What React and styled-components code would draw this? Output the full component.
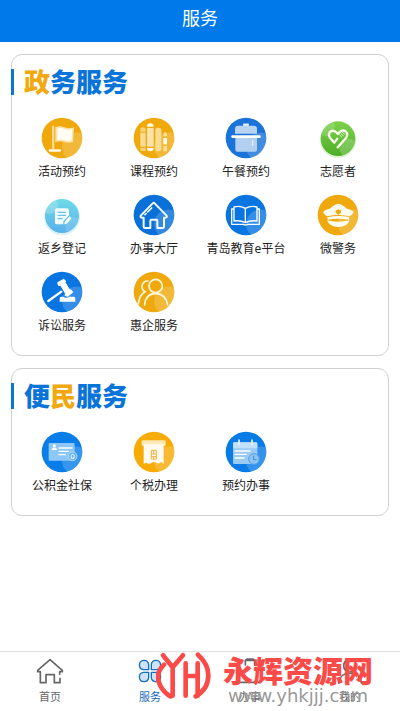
import React from "react";
import styled, { createGlobalStyle } from "styled-components";

const GlobalStyle = createGlobalStyle`
    * {
        box-sizing: border-box;
    }
    body {
        margin: 0;
        background: #fff;
        font-family: "Noto Sans", "Noto Sans CJK SC", sans-serif;
    }
    button {
        border: 0;
        padding: 0;
        background: none;
        font-family: inherit;
        cursor: pointer;
    }
    svg {
        display: block;
        flex-shrink: 0;
    }
    `;

const Page = styled.div`
    display: flex;
    flex-direction: column;
    min-height: 100vh;
    `;

const Header = styled.header`
    display: flex;
    justify-content: center;
    padding: 6px 0 12px;
    background: #007aeb;
    color: #fff;
    `;

const HeaderTitle = styled.h1`
    margin: 0;
    font-size: 18px;
    font-weight: 400;
    line-height: 24px;
    `;

const Main = styled.main`
    display: flex;
    flex: 1;
    flex-direction: column;
    gap: 12px;
    padding: 12px 11px;
    `;

const Card = styled.section`
    padding: 14px 4px 20px;
    border: 1px solid #d0d0d0;
    border-radius: 11px;
    `;

const CardTitle = styled.h2`
    margin: 0 0 22px -5px;
    padding-left: 10px;
    border-left: 3px solid #0b74d8;
    color: #0b74d8;
    font-size: 26px;
    font-weight: 900;
    line-height: 26px;
    `;

const Accent = styled.span`
    color: #f2a90f;
    `;

const Grid = styled.div`
    display: grid;
    grid-template-columns: repeat(4, 1fr);
    row-gap: 13px;
    `;

const Item = styled.button`
    display: flex;
    flex-direction: column;
    align-items: center;
    gap: 4px;
    color: #222;
    font-size: 12px;
    line-height: 18px;
    white-space: nowrap;
    `;

const TabBar = styled.nav`
    position: relative;
    display: grid;
    grid-template-columns: repeat(4, 1fr);
    border-top: 1px solid #e2e2e2;
    `;

const Tab = styled.button`
    display: flex;
    flex-direction: column;
    align-items: center;
    gap: 5px;
    padding: 5px 0 7px;
    color: ${(props) => (props.$active ? "#1268b8" : "#666")};
    font-size: 11px;
    line-height: 14px;
    `;

const Watermark = styled.div`
    position: absolute;
    top: 0;
    right: 27px;
    display: flex;
    gap: 12px;
    pointer-events: none;
    `;

const WatermarkText = styled.div`
    display: flex;
    flex-direction: column;
    align-items: center;
    `;

const WatermarkName = styled.div`
    color: #fb4b49;
    font-size: 30px;
    font-weight: 900;
    line-height: 38px;
    `;

const WatermarkUrl = styled.div`
    color: #999;
    font-family: "DejaVu Sans", sans-serif;
    font-size: 18px;
    line-height: 12px;
    `;

const BLUE = "#0875e1";
const YELLOW = "#f0a90d";

function Badge({ color, children }) {
    return (
        <svg width="42" height="42" viewBox="0 0 126 126" fill="none" aria-hidden="true">
            <circle cx="63" cy="63" r="61" fill={color} />
            <path d="M123 50 A43 43 0 0 0 78 122 A61 61 0 0 0 123 50Z" fill="#fff" opacity="0.18" />
            {children}
        </svg>
    );
}

const FlagIcon = () => (
    <Badge color={YELLOW}>
        <rect x="33" y="26" width="7" height="72" rx="3" fill="#f9dc94" />
        <rect x="23" y="97" width="37" height="7" rx="3" fill="#fffbe8" />
        <path d="M43 31 Q56 25 70 31 T99 31 L96 75 Q84 80 70 75 T43 75Z" fill="#fbe3a9" />
        <path d="M49 35 Q60 31 71 36 T94 36 L92 70 Q82 74 71 70 T49 70Z" fill="#fffdf4" />
    </Badge>
);

const BooksIcon = () => (
    <Badge color={YELLOW}>
        <path d="M22 44 V39 Q22 31 30 31 Q38 31 38 39 V44Z M22 92 H38 V102 H26 Q22 102 22 98Z" fill="#f8d277" />
        <rect x="22" y="47" width="16" height="42" fill="#f9dc94" />
        <path d="M42 29 Q42 19 52 19 Q62 19 62 29Z M42 93 H62 Q62 103 52 103 Q42 103 42 93Z" fill="#fffbe8" />
        <rect x="42" y="33" width="20" height="56" fill="#fbe3a9" />
        <rect x="67" y="32" width="18" height="71" rx="8" fill="#f9dc94" />
        <path d="M91 58 V51 Q91 46 96 46 Q102 46 102 52 V58Z M91 87 H102 V103 H91Z" fill="#f9dc94" />
        <rect x="91" y="63" width="11" height="19" fill="#fffbe8" />
    </Badge>
);

const PotIcon = () => (
    <Badge color="#1973d8">
        <path d="M30 50 V35 Q30 26 39 26 H55 V20 H71 V26 H87 Q96 26 96 35 V50Z" fill="#b9d4f3" />
        <path d="M55 20 H71 V26 H55Z" fill="#e6f1fc" />
        <rect x="19" y="55" width="88" height="8" rx="3" fill="#fff" />
        <path d="M31 63 H96 V98 Q96 104 90 104 H37 Q31 104 31 98Z" fill="#b3cff1" />
        <path d="M83 71 V85" stroke="#e6f1fc" strokeWidth="4" strokeLinecap="round" />
    </Badge>
);

const HeartIcon = () => (
    <svg width="42" height="42" viewBox="0 0 126 126" fill="none" aria-hidden="true">
        <defs>
            <linearGradient id="leaf" x1="0" y1="0" x2="0" y2="1">
                <stop offset="0" stopColor="#7ed24b" />
                <stop offset="1" stopColor="#4cae26" />
            </linearGradient>
        </defs>
        <circle cx="63" cy="69" r="54" fill="#dff3d4" />
        <circle cx="63" cy="65" r="52" fill="url(#leaf)" />
        <path d="M14 48 A52 52 0 0 1 48 15 A27 27 0 0 1 14 55Z" fill="#fff" opacity="0.16" />
        <path d="M114 72 A28 28 0 0 0 77 115 A52 52 0 0 0 114 72Z" fill="#fff" opacity="0.2" />
        <path
            d="M62 91 L87 63 Q95 51 86 43 Q76 37 68 45 L63 51 L57 45 Q46 37 38 46 Q33 54 39 62 L52 77 L61 65"
            stroke="#f7ffe9"
            strokeWidth="7"
            strokeLinecap="round"
            strokeLinejoin="round"
        />
        <path d="M68 54 L74 60 M72 50 L79 56 M77 46 L83 52" stroke="#e4f8cf" strokeWidth="3" strokeLinecap="round" />
    </svg>
);

const NoteIcon = () => (
    <svg width="42" height="42" viewBox="0 0 126 126" fill="none" aria-hidden="true">
        <defs>
            <linearGradient id="sky" x1="0" y1="0" x2="0" y2="1">
                <stop offset="0" stopColor="#6fdbe6" />
                <stop offset="1" stopColor="#59b0ea" />
            </linearGradient>
        </defs>
        <circle cx="63" cy="70" r="54" fill="#dbf1fb" />
        <circle cx="63" cy="66" r="51" fill="url(#sky)" />
        <path d="M14 50 A51 51 0 0 1 46 18 A26 26 0 0 1 14 57Z" fill="#fff" opacity="0.2" />
        <path d="M113 74 A28 28 0 0 0 78 115 A51 51 0 0 0 113 74Z" fill="#fff" opacity="0.15" />
        <path d="M47 43 H77 Q84 43 84 50 V64 L67 82 V91 H47 Q42 91 42 86 V48 Q42 43 47 43Z" fill="#f2fcff" />
        <path d="M50 55 H75 M50 64 H75 M50 74 H65" stroke="#69c3e8" strokeWidth="4" />
        <path d="M86 67 L92 73 L77 89 L70 91 L71 83Z" fill="#f2fcff" />
    </svg>
);

const HouseIcon = () => (
    <Badge color="#0870d8">
        <path
            d="M32 71 V98 Q32 102 36 102 H52 V80 Q52 77 55 77 H70 Q73 77 73 80 V102 H89 Q93 102 93 98 V71 H98 Q104 69 100 64 L65 28 Q62 25 59 28 L24 64 Q20 69 27 71Z"
            stroke="#f5fbff"
            strokeWidth="6"
            strokeLinejoin="round"
        />
        <path d="M36 62 L39 59 M44 54 L56 42" stroke="#f5fbff" strokeWidth="5" strokeLinecap="round" />
    </Badge>
);

const BookIcon = () => (
    <Badge color={BLUE}>
        <path
            d="M61 43 Q45 34 27 39 V81 Q46 78 61 86 Q77 78 96 81 V39 Q78 34 61 43 V86"
            stroke="#fff"
            strokeWidth="4"
            strokeLinejoin="round"
        />
        <path d="M27 45 H20 V91 H55 Q61 95 68 91 H103 V45 H96" stroke="#fff" strokeWidth="4" strokeLinejoin="round" />
    </Badge>
);

const PoliceIcon = () => (
    <Badge color={YELLOW}>
        <path
            d="M18 54 Q21 48 38 44 Q53 30 64 29 Q75 30 90 44 Q107 48 110 54 Q105 65 97 67 Q64 58 31 67 Q23 65 18 54Z"
            fill="#fffdf0"
        />
        <path d="M31 70 Q64 62 97 70 L96 77 Q64 72 32 77Z" fill="#fffdf0" />
        <path d="M30 79 Q64 87 98 79 Q91 99 64 99 Q37 99 30 79Z" fill="#fffdf0" />
        <path d="M64 45 L67 48 L72 49 V56 L64 62 L56 56 V49 L61 48Z" fill={YELLOW} />
    </Badge>
);

const GavelIcon = () => (
    <Badge color={BLUE}>
        <path d="M61 62 L22 90" stroke="#fff" strokeWidth="7" strokeLinecap="round" />
        <path
            d="M50 35 L68 25 L74 30 L72 34 L86 57 L91 57 L95 64 L80 76 L72 73 L74 68 L59 43 L53 44Z"
            fill="#fff"
            stroke="#fff"
            strokeWidth="3"
            strokeLinejoin="round"
        />
        <path d="M56 92 V82 Q56 77 61 77 H67 Q75 84 84 77 H98 Q103 77 103 82 V92Z" fill="#fff" />
    </Badge>
);

const PeopleIcon = () => (
    <Badge color={YELLOW}>
        <g stroke="#fff7dc" strokeWidth="5" strokeLinecap="round">
            <circle cx="68" cy="45" r="20" />
            <path d="M35 102 Q37 69 68 67 Q99 69 104 102" />
            <path d="M45 30 A17 17 0 0 0 36 62 Q19 72 16 98" />
        </g>
    </Badge>
);

const IdCardIcon = () => (
    <Badge color="#0a7ee8">
        <rect x="23" y="36" width="78" height="53" rx="3" fill="#8cc7f7" />
        <circle cx="40" cy="45" r="5" fill="#fff" />
        <path d="M31 57 Q32 50 40 50 Q48 50 49 57Z" fill="#fff" />
        <path d="M54 51 H93 M54 61 H82 M54 71 H73" stroke="#fff" strokeWidth="4" strokeLinecap="round" />
        <circle cx="95" cy="76" r="13" fill="#64b1f2" stroke="#b5dcfb" strokeWidth="3" />
        <path d="M88 76 L95 69 L102 76 M91 76 V82 H99 V76" stroke="#fff" strokeWidth="3" />
    </Badge>
);

const ReceiptIcon = () => (
    <Badge color="#f7ab05">
        <rect x="26" y="28" width="72" height="17" rx="4" fill="#fde9b5" />
        <path d="M32 40 H92 V99 L84 92 Q78 101 70 95 Q62 91 56 95 Q47 102 41 95 L32 98Z" fill="#fffbf0" />
        <path d="M55 58 H70 V69 H55Z M55 69 V84 H70 V69 M55 77 H70 M62 58 V69 M62 77 V84" stroke="#efb43e" strokeWidth="3" />
    </Badge>
);

const CalendarIcon = () => (
    <Badge color="#087be6">
        <rect x="24" y="34" width="73" height="65" rx="4" fill="#9bcaf5" />
        <path d="M24 52 V38 Q24 34 28 34 H93 Q97 34 97 38 V52Z" fill="#c0e0fb" />
        <path d="M42 27 V41 M81 27 V41" stroke="#e5f4ff" strokeWidth="5" strokeLinecap="round" />
        <path d="M30 60 H75 M30 70 H64 M30 81 H57" stroke="#fff" strokeWidth="4" strokeLinecap="round" />
        <circle cx="87" cy="84" r="16" fill="#8dc3f3" stroke="#4f9fe5" strokeWidth="3" />
        <path d="M86 74 V86 H95" stroke="#3c8fdc" strokeWidth="3" />
    </Badge>
);

function TabIcon({ children }) {
    return (
        <svg width="28" height="28" viewBox="0 0 84 84" fill="none" stroke="#666" strokeWidth="5" strokeLinecap="round" strokeLinejoin="round" aria-hidden="true">
            {children}
        </svg>
    );
}

const HomeTabIcon = () => (
    <TabIcon>
        <path d="M72 64 V77 H55 V53 H30 V77 H13 V44 H5 V40 L42 8 L79 40 V44 H71 V52" />
    </TabIcon>
);

const ServiceTabIcon = () => (
    <TabIcon>
        <g fill="#cce3fc" stroke="#176fc4" strokeWidth="4">
            <path d="M38 38 H22 A14 14 0 1 1 38 22Z" />
            <path d="M46 38 V22 A14 14 0 1 1 62 38Z" />
            <path d="M38 46 V62 A14 14 0 1 1 22 46Z" />
            <path d="M46 46 H62 A14 14 0 1 1 46 62Z" />
        </g>
    </TabIcon>
);

const WorkTabIcon = () => (
    <TabIcon>
        <path d="M18 10 H12 Q7 10 7 16 V70 Q7 76 13 76 H71 Q77 76 77 70 V16 Q77 10 71 10 H66 M28 10 H56 M28 24 V10 L34 6 H50 L56 10 V24" />
    </TabIcon>
);

const MineTabIcon = () => (
    <TabIcon>
        <circle cx="42" cy="26" r="19" />
        <path d="M8 78 Q10 50 42 48 Q74 50 76 78" />
    </TabIcon>
);

const governmentServices = [
    { label: "活动预约", Icon: FlagIcon },
    { label: "课程预约", Icon: BooksIcon },
    { label: "午餐预约", Icon: PotIcon },
    { label: "志愿者", Icon: HeartIcon },
    { label: "返乡登记", Icon: NoteIcon },
    { label: "办事大厅", Icon: HouseIcon },
    { label: "青岛教育e平台", Icon: BookIcon },
    { label: "微警务", Icon: PoliceIcon },
    { label: "诉讼服务", Icon: GavelIcon },
    { label: "惠企服务", Icon: PeopleIcon },
];

const citizenServices = [
    { label: "公积金社保", Icon: IdCardIcon },
    { label: "个税办理", Icon: ReceiptIcon },
    { label: "预约办事", Icon: CalendarIcon },
];

const tabs = [
    { label: "首页", Icon: HomeTabIcon },
    { label: "服务", Icon: ServiceTabIcon, active: true },
    { label: "办事", Icon: WorkTabIcon },
    { label: "我的", Icon: MineTabIcon },
];

function ServiceGrid({ items }) {
    return (
        <Grid>
            {items.map(({ label, Icon }) => (
                <Item key={label} type="button">
                    <Icon />
                    <span>{label}</span>
                </Item>
            ))}
        </Grid>
    );
}

function SiteMark() {
    return (
        <Watermark>
            <svg width="55" height="47" viewBox="0 0 165 141" fill="none" stroke="#fb4b49" strokeWidth="14" strokeLinecap="round" aria-hidden="true">
                <path d="M21 10 L50 46 L81 10 M50 46 V131" />
                <path d="M24 38 Q-6 68 14 103 Q26 124 44 133" />
                <path d="M89 34 V131 M89 72 H125 M125 34 V131" />
                <path d="M126 8 Q157 36 157 70 Q157 112 119 133" />
            </svg>
            <WatermarkText>
                <WatermarkName>永辉资源网</WatermarkName>
                <WatermarkUrl>www.yhkjjj.com</WatermarkUrl>
            </WatermarkText>
        </Watermark>
    );
}

function App() {
    return (
        <Page>
            <GlobalStyle />
            <Header>
                <HeaderTitle>服务</HeaderTitle>
            </Header>
            <Main>
                <Card>
                    <CardTitle>
                        <Accent>政</Accent>务服务
                    </CardTitle>
                    <ServiceGrid items={governmentServices} />
                </Card>
                <Card>
                    <CardTitle>
                        便<Accent>民</Accent>服务
                    </CardTitle>
                    <ServiceGrid items={citizenServices} />
                </Card>
            </Main>
            <TabBar>
                {tabs.map(({ label, Icon, active }) => (
                    <Tab key={label} type="button" $active={active}>
                        <Icon />
                        <span>{label}</span>
                    </Tab>
                ))}
                <SiteMark />
            </TabBar>
        </Page>
    );
}

export default App;
